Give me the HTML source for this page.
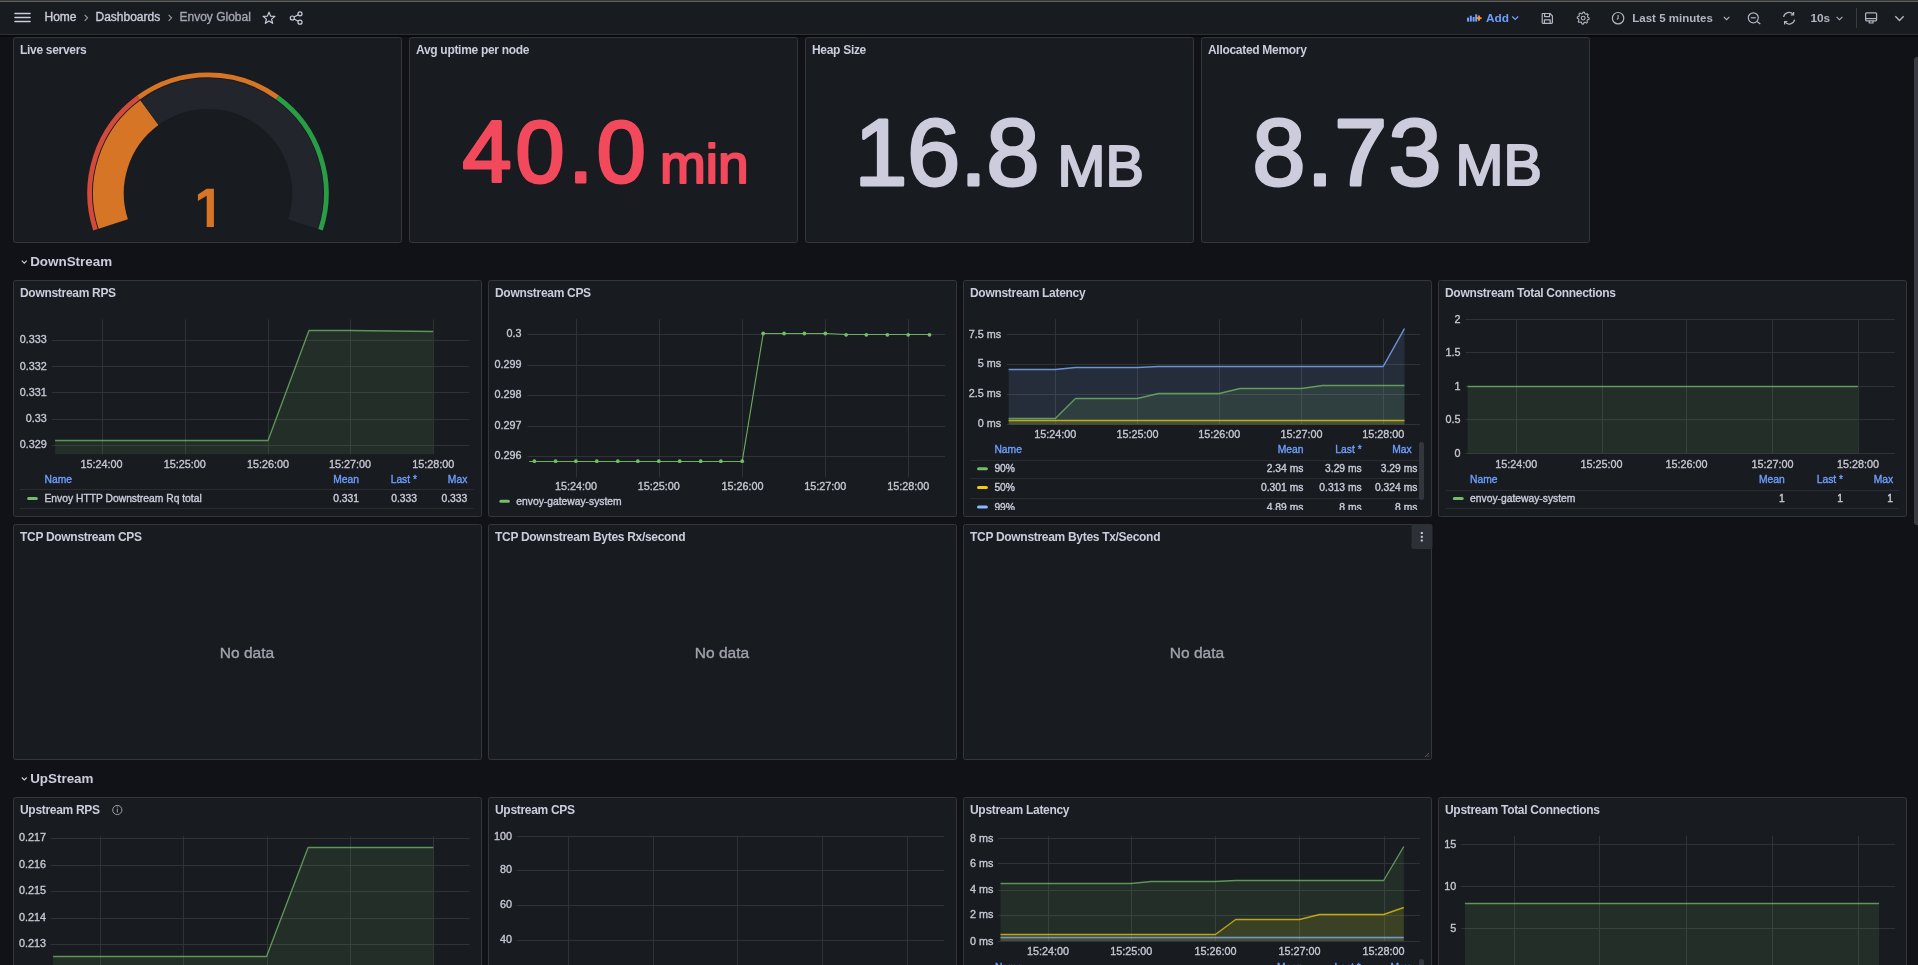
<!DOCTYPE html>
<html><head><meta charset="utf-8"><title>Envoy Global - Dashboards - Grafana</title>
<style>
html,body{margin:0;padding:0;background:#111217;width:1918px;height:965px;overflow:hidden;font-family:"Liberation Sans", sans-serif;}
svg{display:block;font-family:"Liberation Sans", sans-serif;will-change:transform;}
</style></head><body>
<svg width="1918" height="965" viewBox="0 0 1918 965">
<rect x="0" y="0" width="1918" height="35" fill="#181b1f" />
<rect x="0" y="0" width="1918" height="1" fill="#383838" />
<rect x="0" y="1" width="1918" height="1" fill="#606060" />
<rect x="0" y="34" width="1918" height="1" fill="#2e3035" />
<rect x="0" y="35" width="1918" height="2" fill="#08090b" />
<line x1="15" y1="13.5" x2="30" y2="13.5" stroke="#ccccdc" stroke-width="1.6" stroke-linecap="round"/>
<line x1="15" y1="17.5" x2="30" y2="17.5" stroke="#ccccdc" stroke-width="1.6" stroke-linecap="round"/>
<line x1="15" y1="21.5" x2="30" y2="21.5" stroke="#ccccdc" stroke-width="1.6" stroke-linecap="round"/>
<text x="44.5" y="21.3" font-size="12" fill="#ccccdc" font-weight="normal" text-anchor="start"  stroke="#ccccdc" stroke-width="0.35">Home</text>
<path d="M84.6 14.8 L87.6 17.8 L84.6 20.8" fill="none" stroke="#9a9aa8" stroke-width="1.1"/>
<text x="95.5" y="21.3" font-size="12" fill="#ccccdc" font-weight="normal" text-anchor="start"  stroke="#ccccdc" stroke-width="0.35">Dashboards</text>
<path d="M168.6 14.8 L171.6 17.8 L168.6 20.8" fill="none" stroke="#9a9aa8" stroke-width="1.1"/>
<text x="179.5" y="21.3" font-size="12" fill="#a5a5b3" font-weight="normal" text-anchor="start"  stroke="#a5a5b3" stroke-width="0.35">Envoy Global</text>
<polygon points="269.00,12.10 270.59,16.12 274.90,16.38 271.57,19.13 272.64,23.32 269.00,21.00 265.36,23.32 266.43,19.13 263.10,16.38 267.41,16.12" fill="none" stroke="#ccccdc" stroke-width="1.2" stroke-linejoin="round"/>
<g fill="none" stroke="#ccccdc" stroke-width="1.2"><circle cx="292.3" cy="18" r="2"/><circle cx="300" cy="13.8" r="2"/><circle cx="300" cy="22.2" r="2"/><line x1="294" y1="17" x2="298.3" y2="14.8"/><line x1="294" y1="19" x2="298.3" y2="21.2"/></g>
<rect x="1467" y="17.6" width="2" height="4.0" fill="#6e9fff" />
<rect x="1469.8" y="15.7" width="2" height="5.900000000000002" fill="#6e9fff" />
<rect x="1472.6" y="17" width="2" height="4.600000000000001" fill="#6e9fff" />
<rect x="1475.2" y="14.3" width="2" height="7.300000000000001" fill="#6e9fff" />
<path d="M1479 15.5 V20.7 M1476.4 18.1 H1481.6" stroke="#ff9830" stroke-width="1.8"/>
<text x="1486" y="21.6" font-size="11.8" fill="#6e9fff" font-weight="bold" text-anchor="start" >Add</text>
<path d="M1512.2 16.5 L1515.2 19.5 L1518.2 16.5" fill="none" stroke="#6e9fff" stroke-width="1.2"/>
<g fill="none" stroke="#b4b4c2" stroke-width="1.2" stroke-linejoin="round"><path d="M1542.2 13.5 H1550 L1552.4 15.9 V22.5 a0.8 0.8 0 0 1 -0.8 0.8 H1543 a0.8 0.8 0 0 1 -0.8 -0.8 Z"/><path d="M1544.6 13.5 V16.6 H1549.6 V13.5"/><path d="M1544.4 23.2 V19.8 H1550.2 V23.2"/></g>
<polygon points="1583.20,12.10 1584.37,12.22 1584.96,13.85 1585.76,14.28 1587.44,13.86 1588.19,14.77 1587.45,16.34 1587.71,17.20 1589.20,18.10 1589.08,19.27 1587.45,19.86 1587.02,20.66 1587.44,22.34 1586.53,23.09 1584.96,22.35 1584.10,22.61 1583.20,24.10 1582.03,23.98 1581.44,22.35 1580.64,21.92 1578.96,22.34 1578.21,21.43 1578.95,19.86 1578.69,19.00 1577.20,18.10 1577.32,16.93 1578.95,16.34 1579.38,15.54 1578.96,13.86 1579.87,13.11 1581.44,13.85 1582.30,13.59" fill="none" stroke="#b4b4c2" stroke-width="1.1" stroke-linejoin="round"/>
<circle cx="1583.2" cy="18.1" r="1.9" fill="none" stroke="#b4b4c2" stroke-width="1.1"/>
<circle cx="1618.1" cy="18.2" r="5.7" fill="none" stroke="#b4b4c2" stroke-width="1.2"/><path d="M1618.1 15 V18.4 L1616.8 19.4" fill="none" stroke="#b4b4c2" stroke-width="1.1"/>
<text x="1632.3" y="22.2" font-size="11.5" fill="#b4b4c2" font-weight="bold" text-anchor="start" >Last 5 minutes</text>
<path d="M1723.8 16.9 L1726.6 19.7 L1729.4 16.9" fill="none" stroke="#b4b4c2" stroke-width="1.1"/>
<g fill="none" stroke="#b4b4c2" stroke-width="1.2"><circle cx="1753.3" cy="17.8" r="5"/><path d="M1757 21.5 L1760.3 24"/><path d="M1750.8 17.8 H1755.8"/></g>
<g fill="none" stroke="#b4b4c2" stroke-width="1.2"><path d="M1783.6 17 A5.6 5.6 0 0 1 1793.2 14.2"/><path d="M1794.6 19.6 A5.6 5.6 0 0 1 1785 22.2"/><path d="M1793.6 11.9 V14.8 H1790.8"/><path d="M1784.6 24.5 V21.6 H1787.4"/></g>
<text x="1810.5" y="22.2" font-size="11.8" fill="#b4b4c2" font-weight="bold" text-anchor="start" >10s</text>
<path d="M1836.6 16.9 L1839.5 19.8 L1842.4 16.9" fill="none" stroke="#b4b4c2" stroke-width="1.1"/>
<rect x="1856" y="8" width="1" height="20" fill="#3a3c42" />
<g fill="none" stroke="#b4b4c2" stroke-width="1.2"><rect x="1865.6" y="12.8" width="11" height="8" rx="1"/><path d="M1865.6 18.6 H1876.6"/><path d="M1869.3 20.8 V23 H1873 V20.8"/></g>
<path d="M1895.3 16.2 L1899.5 20.4 L1903.7 16.2" fill="none" stroke="#b4b4c2" stroke-width="1.4"/>
<rect x="13.5" y="37.5" width="388" height="205" rx="2" fill="#181b1f" stroke="#34363b" stroke-width="1"/>
<text x="20" y="54" font-size="12" fill="#ccccdc" font-weight="bold" text-anchor="start" letter-spacing="-0.3">Live servers</text>
<rect x="409.5" y="37.5" width="388" height="205" rx="2" fill="#181b1f" stroke="#34363b" stroke-width="1"/>
<text x="416" y="54" font-size="12" fill="#ccccdc" font-weight="bold" text-anchor="start" letter-spacing="-0.3">Avg uptime per node</text>
<rect x="805.5" y="37.5" width="388" height="205" rx="2" fill="#181b1f" stroke="#34363b" stroke-width="1"/>
<text x="812" y="54" font-size="12" fill="#ccccdc" font-weight="bold" text-anchor="start" letter-spacing="-0.3">Heap Size</text>
<rect x="1201.5" y="37.5" width="388" height="205" rx="2" fill="#181b1f" stroke="#34363b" stroke-width="1"/>
<text x="1208" y="54" font-size="12" fill="#ccccdc" font-weight="bold" text-anchor="start" letter-spacing="-0.3">Allocated Memory</text>
<path d="M95.49 229.76 A118.3 118.3 0 0 1 138.47 97.49" fill="none" stroke="#d44a3a" stroke-width="4.8"/>
<path d="M138.47 97.49 A118.3 118.3 0 0 1 277.53 97.49" fill="none" stroke="#d67526" stroke-width="4.8"/>
<path d="M277.53 97.49 A118.3 118.3 0 0 1 320.51 229.76" fill="none" stroke="#299c46" stroke-width="4.8"/>
<path d="M113.27 223.98 A99.6 99.6 0 0 1 149.46 112.62" fill="none" stroke="#d67526" stroke-width="30.8"/>
<path d="M149.46 112.62 A99.6 99.6 0 0 1 302.73 223.98" fill="none" stroke="#22252b" stroke-width="30.8"/>
<path d="M197.9 194.4 L206.6 188.8 L213.9 188.8 L213.9 227 L206.7 227 L206.7 195.7 L197.9 200.9 Z" fill="#d67526"/>
<text x="462.5" y="182.3" font-size="88" fill="#f2495c" font-weight="normal" text-anchor="start" stroke="#f2495c" stroke-width="3" stroke-linejoin="round" letter-spacing="4">40.0</text>
<text x="660" y="182.70000000000002" font-size="55" fill="#f2495c" font-weight="normal" text-anchor="start" stroke="#f2495c" stroke-width="2.2" stroke-linejoin="round" letter-spacing="0">min</text>
<text x="854.5" y="185.4" font-size="95" fill="#ccccdc" font-weight="normal" text-anchor="start" stroke="#ccccdc" stroke-width="3" stroke-linejoin="round" letter-spacing="0">16.8</text>
<text x="1057.5" y="185.8" font-size="57.5" fill="#ccccdc" font-weight="normal" text-anchor="start" stroke="#ccccdc" stroke-width="2.2" stroke-linejoin="round" letter-spacing="0">MB</text>
<text x="1252.5" y="184.6" font-size="95" fill="#ccccdc" font-weight="normal" text-anchor="start" stroke="#ccccdc" stroke-width="3" stroke-linejoin="round" letter-spacing="1.3">8.73</text>
<text x="1455.5" y="185.0" font-size="57.5" fill="#ccccdc" font-weight="normal" text-anchor="start" stroke="#ccccdc" stroke-width="2.2" stroke-linejoin="round" letter-spacing="0">MB</text>
<text x="30.2" y="266.2" font-size="13.4" fill="#ccccdc" font-weight="bold" text-anchor="start" >DownStream</text>
<path d="M21.8 260.59999999999997 L24.3 263.09999999999997 L26.8 260.59999999999997" fill="none" stroke="#ccccdc" stroke-width="1.1"/>
<text x="30.2" y="783.1" font-size="13.4" fill="#ccccdc" font-weight="bold" text-anchor="start" >UpStream</text>
<path d="M21.8 777.5 L24.3 780.0 L26.8 777.5" fill="none" stroke="#ccccdc" stroke-width="1.1"/>
<rect x="13.5" y="280.5" width="468" height="236" rx="2" fill="#181b1f" stroke="#34363b" stroke-width="1"/>
<text x="20" y="297" font-size="12" fill="#ccccdc" font-weight="bold" text-anchor="start" letter-spacing="-0.3">Downstream RPS</text>
<line x1="51.8" y1="340.5" x2="469.3" y2="340.5" stroke="#303237" stroke-width="1"/>
<line x1="51.8" y1="366.5" x2="469.3" y2="366.5" stroke="#303237" stroke-width="1"/>
<line x1="51.8" y1="392.5" x2="469.3" y2="392.5" stroke="#303237" stroke-width="1"/>
<line x1="51.8" y1="419.5" x2="469.3" y2="419.5" stroke="#303237" stroke-width="1"/>
<line x1="51.8" y1="445.5" x2="469.3" y2="445.5" stroke="#303237" stroke-width="1"/>
<line x1="102.5" y1="319.4" x2="102.5" y2="454.3" stroke="#303237" stroke-width="1"/>
<line x1="185.5" y1="319.4" x2="185.5" y2="454.3" stroke="#303237" stroke-width="1"/>
<line x1="268.5" y1="319.4" x2="268.5" y2="454.3" stroke="#303237" stroke-width="1"/>
<line x1="350.5" y1="319.4" x2="350.5" y2="454.3" stroke="#303237" stroke-width="1"/>
<line x1="433.5" y1="319.4" x2="433.5" y2="454.3" stroke="#303237" stroke-width="1"/>
<text x="46.7" y="343.4" font-size="10.8" fill="#c7c7d3" font-weight="normal" text-anchor="end"  stroke="#c7c7d3" stroke-width="0.35">0.333</text>
<text x="46.7" y="369.5" font-size="10.8" fill="#c7c7d3" font-weight="normal" text-anchor="end"  stroke="#c7c7d3" stroke-width="0.35">0.332</text>
<text x="46.7" y="395.5" font-size="10.8" fill="#c7c7d3" font-weight="normal" text-anchor="end"  stroke="#c7c7d3" stroke-width="0.35">0.331</text>
<text x="46.7" y="422.09999999999997" font-size="10.8" fill="#c7c7d3" font-weight="normal" text-anchor="end"  stroke="#c7c7d3" stroke-width="0.35">0.33</text>
<text x="46.7" y="448.4" font-size="10.8" fill="#c7c7d3" font-weight="normal" text-anchor="end"  stroke="#c7c7d3" stroke-width="0.35">0.329</text>
<text x="101.6" y="468.4" font-size="10.8" fill="#c7c7d3" font-weight="normal" text-anchor="middle"  stroke="#c7c7d3" stroke-width="0.35">15:24:00</text>
<text x="184.7" y="468.4" font-size="10.8" fill="#c7c7d3" font-weight="normal" text-anchor="middle"  stroke="#c7c7d3" stroke-width="0.35">15:25:00</text>
<text x="268.1" y="468.4" font-size="10.8" fill="#c7c7d3" font-weight="normal" text-anchor="middle"  stroke="#c7c7d3" stroke-width="0.35">15:26:00</text>
<text x="350.1" y="468.4" font-size="10.8" fill="#c7c7d3" font-weight="normal" text-anchor="middle"  stroke="#c7c7d3" stroke-width="0.35">15:27:00</text>
<text x="433.2" y="468.4" font-size="10.8" fill="#c7c7d3" font-weight="normal" text-anchor="middle"  stroke="#c7c7d3" stroke-width="0.35">15:28:00</text>
<clipPath id="c1"><rect x="14" y="281" width="467" height="235"/></clipPath>
<g clip-path="url(#c1)">
<path d="M55.1 440.6 L268.0 440.6 L309.0 330.6 L350.0 330.8 L433.2 331.7 L433.2 454.3 L55.1 454.3 Z" fill="#73bf69" fill-opacity="0.12"/>
<path d="M55.1 440.5 L268.0 440.5 L309.0 330.5 L350.0 330.5 L433.2 331.5" fill="none" stroke="#73bf69" stroke-opacity="0.74" stroke-width="1.35" stroke-linejoin="round"/>
</g>
<g clip-path="url(#c1L)">
<clipPath id="c1L"><rect x="14" y="280" width="467" height="235"/></clipPath>
<text x="44.5" y="483.2" font-size="10.3" fill="#6e9fff" font-weight="normal" text-anchor="start"  stroke="#6e9fff" stroke-width="0.35">Name</text>
<text x="359" y="483.2" font-size="10.3" fill="#6e9fff" font-weight="normal" text-anchor="end"  stroke="#6e9fff" stroke-width="0.35">Mean</text>
<text x="417" y="483.2" font-size="10.3" fill="#6e9fff" font-weight="normal" text-anchor="end"  stroke="#6e9fff" stroke-width="0.35">Last *</text>
<text x="467.3" y="483.2" font-size="10.3" fill="#6e9fff" font-weight="normal" text-anchor="end"  stroke="#6e9fff" stroke-width="0.35">Max</text>
<line x1="20" y1="489.5" x2="473.5" y2="489.5" stroke="#2a2c31" stroke-width="1"/>
<line x1="20" y1="508.5" x2="473.5" y2="508.5" stroke="#2a2c31" stroke-width="1"/>
<rect x="27.1" y="497.0" width="10.699999999999996" height="3" rx="1.5" fill="#73bf69"/>
<text x="44.5" y="502.2" font-size="10.3" fill="#ccccdc" font-weight="normal" text-anchor="start"  stroke="#ccccdc" stroke-width="0.35">Envoy HTTP Downstream Rq total</text>
<text x="359" y="502.2" font-size="10.3" fill="#ccccdc" font-weight="normal" text-anchor="end"  stroke="#ccccdc" stroke-width="0.35">0.331</text>
<text x="417" y="502.2" font-size="10.3" fill="#ccccdc" font-weight="normal" text-anchor="end"  stroke="#ccccdc" stroke-width="0.35">0.333</text>
<text x="467.3" y="502.2" font-size="10.3" fill="#ccccdc" font-weight="normal" text-anchor="end"  stroke="#ccccdc" stroke-width="0.35">0.333</text>
</g>
<rect x="488.5" y="280.5" width="468" height="236" rx="2" fill="#181b1f" stroke="#34363b" stroke-width="1"/>
<text x="495" y="297" font-size="12" fill="#ccccdc" font-weight="bold" text-anchor="start" letter-spacing="-0.3">Downstream CPS</text>
<line x1="527.4" y1="334.5" x2="945" y2="334.5" stroke="#303237" stroke-width="1"/>
<line x1="527.4" y1="365.5" x2="945" y2="365.5" stroke="#303237" stroke-width="1"/>
<line x1="527.4" y1="395.5" x2="945" y2="395.5" stroke="#303237" stroke-width="1"/>
<line x1="527.4" y1="426.5" x2="945" y2="426.5" stroke="#303237" stroke-width="1"/>
<line x1="527.4" y1="456.5" x2="945" y2="456.5" stroke="#303237" stroke-width="1"/>
<line x1="576.5" y1="319.2" x2="576.5" y2="477.3" stroke="#303237" stroke-width="1"/>
<line x1="659.5" y1="319.2" x2="659.5" y2="477.3" stroke="#303237" stroke-width="1"/>
<line x1="742.5" y1="319.2" x2="742.5" y2="477.3" stroke="#303237" stroke-width="1"/>
<line x1="825.5" y1="319.2" x2="825.5" y2="477.3" stroke="#303237" stroke-width="1"/>
<line x1="908.5" y1="319.2" x2="908.5" y2="477.3" stroke="#303237" stroke-width="1"/>
<text x="521.5" y="337.4" font-size="10.8" fill="#c7c7d3" font-weight="normal" text-anchor="end"  stroke="#c7c7d3" stroke-width="0.35">0.3</text>
<text x="521.5" y="367.9" font-size="10.8" fill="#c7c7d3" font-weight="normal" text-anchor="end"  stroke="#c7c7d3" stroke-width="0.35">0.299</text>
<text x="521.5" y="398.29999999999995" font-size="10.8" fill="#c7c7d3" font-weight="normal" text-anchor="end"  stroke="#c7c7d3" stroke-width="0.35">0.298</text>
<text x="521.5" y="429.29999999999995" font-size="10.8" fill="#c7c7d3" font-weight="normal" text-anchor="end"  stroke="#c7c7d3" stroke-width="0.35">0.297</text>
<text x="521.5" y="459.4" font-size="10.8" fill="#c7c7d3" font-weight="normal" text-anchor="end"  stroke="#c7c7d3" stroke-width="0.35">0.296</text>
<text x="575.9" y="490.2" font-size="10.8" fill="#c7c7d3" font-weight="normal" text-anchor="middle"  stroke="#c7c7d3" stroke-width="0.35">15:24:00</text>
<text x="658.8" y="490.2" font-size="10.8" fill="#c7c7d3" font-weight="normal" text-anchor="middle"  stroke="#c7c7d3" stroke-width="0.35">15:25:00</text>
<text x="742.4" y="490.2" font-size="10.8" fill="#c7c7d3" font-weight="normal" text-anchor="middle"  stroke="#c7c7d3" stroke-width="0.35">15:26:00</text>
<text x="825.3" y="490.2" font-size="10.8" fill="#c7c7d3" font-weight="normal" text-anchor="middle"  stroke="#c7c7d3" stroke-width="0.35">15:27:00</text>
<text x="908.2" y="490.2" font-size="10.8" fill="#c7c7d3" font-weight="normal" text-anchor="middle"  stroke="#c7c7d3" stroke-width="0.35">15:28:00</text>
<clipPath id="c2"><rect x="489" y="281" width="467" height="235"/></clipPath>
<g clip-path="url(#c2)">
<path d="M529.2 461.5 L534.4 461.5 L555.6 461.5 L575.9 461.5 L596.8 461.5 L617.8 461.5 L637.8 461.5 L658.8 461.5 L679.7 461.5 L700.7 461.5 L720.9 461.5 L742.2 461.5 L763.2 333.5 L784.1 333.5 L804.4 333.5 L825.3 333.5 L846.1 334.5 L866.3 334.5 L887.3 334.5 L908.2 334.5 L929.5 334.5" fill="none" stroke="#6cb163" stroke-opacity="1" stroke-width="1.1" stroke-linejoin="round"/>
<circle cx="534.4" cy="461.2" r="1.9" fill="#73bf69"/>
<circle cx="555.6" cy="461.2" r="1.9" fill="#73bf69"/>
<circle cx="575.9" cy="461.2" r="1.9" fill="#73bf69"/>
<circle cx="596.8" cy="461.2" r="1.9" fill="#73bf69"/>
<circle cx="617.8" cy="461.2" r="1.9" fill="#73bf69"/>
<circle cx="637.8" cy="461.2" r="1.9" fill="#73bf69"/>
<circle cx="658.8" cy="461.2" r="1.9" fill="#73bf69"/>
<circle cx="679.7" cy="461.2" r="1.9" fill="#73bf69"/>
<circle cx="700.7" cy="461.2" r="1.9" fill="#73bf69"/>
<circle cx="720.9" cy="461.2" r="1.9" fill="#73bf69"/>
<circle cx="742.2" cy="461.2" r="1.9" fill="#73bf69"/>
<circle cx="763.2" cy="333.5" r="1.9" fill="#73bf69"/>
<circle cx="784.1" cy="333.5" r="1.9" fill="#73bf69"/>
<circle cx="804.4" cy="333.5" r="1.9" fill="#73bf69"/>
<circle cx="825.3" cy="333.5" r="1.9" fill="#73bf69"/>
<circle cx="846.1" cy="334.8" r="1.9" fill="#73bf69"/>
<circle cx="866.3" cy="334.8" r="1.9" fill="#73bf69"/>
<circle cx="887.3" cy="334.8" r="1.9" fill="#73bf69"/>
<circle cx="908.2" cy="334.8" r="1.9" fill="#73bf69"/>
<circle cx="929.5" cy="334.8" r="1.9" fill="#73bf69"/>
</g>
<rect x="499.4" y="499.8" width="10.400000000000034" height="3" rx="1.5" fill="#73bf69"/>
<text x="516.3" y="505.0" font-size="10.3" fill="#ccccdc" font-weight="normal" text-anchor="start"  stroke="#ccccdc" stroke-width="0.35">envoy-gateway-system</text>
<rect x="963.5" y="280.5" width="468" height="236" rx="2" fill="#181b1f" stroke="#34363b" stroke-width="1"/>
<text x="970" y="297" font-size="12" fill="#ccccdc" font-weight="bold" text-anchor="start" letter-spacing="-0.3">Downstream Latency</text>
<line x1="1006.8" y1="334.5" x2="1420" y2="334.5" stroke="#303237" stroke-width="1"/>
<line x1="1006.8" y1="364.5" x2="1420" y2="364.5" stroke="#303237" stroke-width="1"/>
<line x1="1006.8" y1="394.5" x2="1420" y2="394.5" stroke="#303237" stroke-width="1"/>
<line x1="1006.8" y1="424.5" x2="1420" y2="424.5" stroke="#303237" stroke-width="1"/>
<line x1="1055.5" y1="319.2" x2="1055.5" y2="424.5" stroke="#303237" stroke-width="1"/>
<line x1="1137.5" y1="319.2" x2="1137.5" y2="424.5" stroke="#303237" stroke-width="1"/>
<line x1="1219.5" y1="319.2" x2="1219.5" y2="424.5" stroke="#303237" stroke-width="1"/>
<line x1="1301.5" y1="319.2" x2="1301.5" y2="424.5" stroke="#303237" stroke-width="1"/>
<line x1="1383.5" y1="319.2" x2="1383.5" y2="424.5" stroke="#303237" stroke-width="1"/>
<text x="1001.1" y="337.59999999999997" font-size="10.8" fill="#c7c7d3" font-weight="normal" text-anchor="end"  stroke="#c7c7d3" stroke-width="0.35">7.5 ms</text>
<text x="1001.1" y="367.2" font-size="10.8" fill="#c7c7d3" font-weight="normal" text-anchor="end"  stroke="#c7c7d3" stroke-width="0.35">5 ms</text>
<text x="1001.1" y="397.2" font-size="10.8" fill="#c7c7d3" font-weight="normal" text-anchor="end"  stroke="#c7c7d3" stroke-width="0.35">2.5 ms</text>
<text x="1001.1" y="427.29999999999995" font-size="10.8" fill="#c7c7d3" font-weight="normal" text-anchor="end"  stroke="#c7c7d3" stroke-width="0.35">0 ms</text>
<text x="1055.3" y="438.4" font-size="10.8" fill="#c7c7d3" font-weight="normal" text-anchor="middle"  stroke="#c7c7d3" stroke-width="0.35">15:24:00</text>
<text x="1137.4" y="438.4" font-size="10.8" fill="#c7c7d3" font-weight="normal" text-anchor="middle"  stroke="#c7c7d3" stroke-width="0.35">15:25:00</text>
<text x="1219.2" y="438.4" font-size="10.8" fill="#c7c7d3" font-weight="normal" text-anchor="middle"  stroke="#c7c7d3" stroke-width="0.35">15:26:00</text>
<text x="1301.4" y="438.4" font-size="10.8" fill="#c7c7d3" font-weight="normal" text-anchor="middle"  stroke="#c7c7d3" stroke-width="0.35">15:27:00</text>
<text x="1383.2" y="438.4" font-size="10.8" fill="#c7c7d3" font-weight="normal" text-anchor="middle"  stroke="#c7c7d3" stroke-width="0.35">15:28:00</text>
<clipPath id="c3"><rect x="964" y="281" width="467" height="235"/></clipPath>
<g clip-path="url(#c3)">
<path d="M1008.6 369.0 L1055.3 369.0 L1075.5 367.9 L1137.4 367.9 L1158.4 366.9 L1301.4 366.9 L1322.4 366.1 L1383.2 366.1 L1404.5 328.5 L1404.5 424.5 L1008.6 424.5 Z" fill="#8ab8ff" fill-opacity="0.12"/>
<path d="M1008.6 418.2 L1055.3 418.2 L1075.5 398.2 L1137.4 398.2 L1158.4 393.3 L1219.2 393.3 L1240.0 388.1 L1301.4 388.1 L1322.4 385.3 L1404.5 385.3 L1404.5 424.5 L1008.6 424.5 Z" fill="#73bf69" fill-opacity="0.12"/>
<path d="M1008.6 420.3 L1404.5 420.3 L1404.5 424.5 L1008.6 424.5 Z" fill="#f2cc0c" fill-opacity="0.12"/>
<path d="M1008.6 369.5 L1055.3 369.5 L1075.5 367.5 L1137.4 367.5 L1158.4 366.5 L1301.4 366.5 L1322.4 366.5 L1383.2 366.5 L1404.5 328.5" fill="none" stroke="#6b93d6" stroke-opacity="1" stroke-width="1.5" stroke-linejoin="round"/>
<path d="M1008.6 418.5 L1055.3 418.5 L1075.5 398.5 L1137.4 398.5 L1158.4 393.5 L1219.2 393.5 L1240.0 388.5 L1301.4 388.5 L1322.4 385.5 L1404.5 385.5" fill="none" stroke="#73bf69" stroke-opacity="0.74" stroke-width="1.35" stroke-linejoin="round"/>
<path d="M1008.6 420.5 L1404.5 420.5" fill="none" stroke="#f2cc0c" stroke-opacity="0.74" stroke-width="1.35" stroke-linejoin="round"/>
</g>
<g clip-path="url(#c3L)">
<clipPath id="c3L"><rect x="964" y="280" width="467" height="230"/></clipPath>
<text x="994.4" y="453.2" font-size="10.3" fill="#6e9fff" font-weight="normal" text-anchor="start"  stroke="#6e9fff" stroke-width="0.35">Name</text>
<text x="1303.4" y="453.2" font-size="10.3" fill="#6e9fff" font-weight="normal" text-anchor="end"  stroke="#6e9fff" stroke-width="0.35">Mean</text>
<text x="1361.7" y="453.2" font-size="10.3" fill="#6e9fff" font-weight="normal" text-anchor="end"  stroke="#6e9fff" stroke-width="0.35">Last *</text>
<text x="1411.7" y="453.2" font-size="10.3" fill="#6e9fff" font-weight="normal" text-anchor="end"  stroke="#6e9fff" stroke-width="0.35">Max</text>
<line x1="970" y1="460.5" x2="1423" y2="460.5" stroke="#2a2c31" stroke-width="1"/>
<line x1="970" y1="478.5" x2="1423" y2="478.5" stroke="#2a2c31" stroke-width="1"/>
<line x1="970" y1="498.5" x2="1423" y2="498.5" stroke="#2a2c31" stroke-width="1"/>
<rect x="977" y="467.2" width="10.899999999999977" height="3" rx="1.5" fill="#73bf69"/>
<text x="994.4" y="472.4" font-size="10.3" fill="#ccccdc" font-weight="normal" text-anchor="start"  stroke="#ccccdc" stroke-width="0.35">90%</text>
<text x="1303.4" y="472.4" font-size="10.3" fill="#ccccdc" font-weight="normal" text-anchor="end"  stroke="#ccccdc" stroke-width="0.35">2.34 ms</text>
<text x="1361.7" y="472.4" font-size="10.3" fill="#ccccdc" font-weight="normal" text-anchor="end"  stroke="#ccccdc" stroke-width="0.35">3.29 ms</text>
<text x="1417.4" y="472.4" font-size="10.3" fill="#ccccdc" font-weight="normal" text-anchor="end"  stroke="#ccccdc" stroke-width="0.35">3.29 ms</text>
<rect x="977" y="486.1" width="10.899999999999977" height="3" rx="1.5" fill="#f2cc0c"/>
<text x="994.4" y="491.3" font-size="10.3" fill="#ccccdc" font-weight="normal" text-anchor="start"  stroke="#ccccdc" stroke-width="0.35">50%</text>
<text x="1303.4" y="491.3" font-size="10.3" fill="#ccccdc" font-weight="normal" text-anchor="end"  stroke="#ccccdc" stroke-width="0.35">0.301 ms</text>
<text x="1361.7" y="491.3" font-size="10.3" fill="#ccccdc" font-weight="normal" text-anchor="end"  stroke="#ccccdc" stroke-width="0.35">0.313 ms</text>
<text x="1417.4" y="491.3" font-size="10.3" fill="#ccccdc" font-weight="normal" text-anchor="end"  stroke="#ccccdc" stroke-width="0.35">0.324 ms</text>
<rect x="977" y="505.5" width="10.899999999999977" height="3" rx="1.5" fill="#8ab8ff"/>
<text x="994.4" y="510.7" font-size="10.3" fill="#ccccdc" font-weight="normal" text-anchor="start"  stroke="#ccccdc" stroke-width="0.35">99%</text>
<text x="1303.4" y="510.7" font-size="10.3" fill="#ccccdc" font-weight="normal" text-anchor="end"  stroke="#ccccdc" stroke-width="0.35">4.89 ms</text>
<text x="1361.7" y="510.7" font-size="10.3" fill="#ccccdc" font-weight="normal" text-anchor="end"  stroke="#ccccdc" stroke-width="0.35">8 ms</text>
<text x="1417.4" y="510.7" font-size="10.3" fill="#ccccdc" font-weight="normal" text-anchor="end"  stroke="#ccccdc" stroke-width="0.35">8 ms</text>
</g>
<rect x="1419" y="442" width="5" height="58" rx="2.5" fill="#34363d"/>
<rect x="1438.5" y="280.5" width="468" height="236" rx="2" fill="#181b1f" stroke="#34363b" stroke-width="1"/>
<text x="1445" y="297" font-size="12" fill="#ccccdc" font-weight="bold" text-anchor="start" letter-spacing="-0.3">Downstream Total Connections</text>
<line x1="1465.5" y1="319.5" x2="1894.9" y2="319.5" stroke="#303237" stroke-width="1"/>
<line x1="1465.5" y1="352.5" x2="1894.9" y2="352.5" stroke="#303237" stroke-width="1"/>
<line x1="1465.5" y1="386.5" x2="1894.9" y2="386.5" stroke="#303237" stroke-width="1"/>
<line x1="1465.5" y1="419.5" x2="1894.9" y2="419.5" stroke="#303237" stroke-width="1"/>
<line x1="1465.5" y1="453.5" x2="1894.9" y2="453.5" stroke="#303237" stroke-width="1"/>
<line x1="1516.5" y1="319" x2="1516.5" y2="453.4" stroke="#303237" stroke-width="1"/>
<line x1="1602.5" y1="319" x2="1602.5" y2="453.4" stroke="#303237" stroke-width="1"/>
<line x1="1686.5" y1="319" x2="1686.5" y2="453.4" stroke="#303237" stroke-width="1"/>
<line x1="1772.5" y1="319" x2="1772.5" y2="453.4" stroke="#303237" stroke-width="1"/>
<line x1="1858.5" y1="319" x2="1858.5" y2="453.4" stroke="#303237" stroke-width="1"/>
<text x="1460.6" y="322.59999999999997" font-size="10.8" fill="#c7c7d3" font-weight="normal" text-anchor="end"  stroke="#c7c7d3" stroke-width="0.35">2</text>
<text x="1460.6" y="355.7" font-size="10.8" fill="#c7c7d3" font-weight="normal" text-anchor="end"  stroke="#c7c7d3" stroke-width="0.35">1.5</text>
<text x="1460.6" y="389.7" font-size="10.8" fill="#c7c7d3" font-weight="normal" text-anchor="end"  stroke="#c7c7d3" stroke-width="0.35">1</text>
<text x="1460.6" y="422.79999999999995" font-size="10.8" fill="#c7c7d3" font-weight="normal" text-anchor="end"  stroke="#c7c7d3" stroke-width="0.35">0.5</text>
<text x="1460.6" y="456.5" font-size="10.8" fill="#c7c7d3" font-weight="normal" text-anchor="end"  stroke="#c7c7d3" stroke-width="0.35">0</text>
<text x="1516.2" y="468.09999999999997" font-size="10.8" fill="#c7c7d3" font-weight="normal" text-anchor="middle"  stroke="#c7c7d3" stroke-width="0.35">15:24:00</text>
<text x="1601.5" y="468.09999999999997" font-size="10.8" fill="#c7c7d3" font-weight="normal" text-anchor="middle"  stroke="#c7c7d3" stroke-width="0.35">15:25:00</text>
<text x="1686.4" y="468.09999999999997" font-size="10.8" fill="#c7c7d3" font-weight="normal" text-anchor="middle"  stroke="#c7c7d3" stroke-width="0.35">15:26:00</text>
<text x="1772.4" y="468.09999999999997" font-size="10.8" fill="#c7c7d3" font-weight="normal" text-anchor="middle"  stroke="#c7c7d3" stroke-width="0.35">15:27:00</text>
<text x="1857.9" y="468.09999999999997" font-size="10.8" fill="#c7c7d3" font-weight="normal" text-anchor="middle"  stroke="#c7c7d3" stroke-width="0.35">15:28:00</text>
<clipPath id="c4"><rect x="1439" y="281" width="467" height="235"/></clipPath>
<g clip-path="url(#c4)">
<path d="M1467.6 386.5 L1857.9 386.5 L1857.9 453.4 L1467.6 453.4 Z" fill="#73bf69" fill-opacity="0.12"/>
<path d="M1467.6 386.5 L1857.9 386.5" fill="none" stroke="#73bf69" stroke-opacity="0.74" stroke-width="1.35" stroke-linejoin="round"/>
</g>
<g clip-path="url(#c4L)">
<clipPath id="c4L"><rect x="1439" y="280" width="467" height="235"/></clipPath>
<text x="1470.1" y="483.0" font-size="10.3" fill="#6e9fff" font-weight="normal" text-anchor="start"  stroke="#6e9fff" stroke-width="0.35">Name</text>
<text x="1784.8" y="483.0" font-size="10.3" fill="#6e9fff" font-weight="normal" text-anchor="end"  stroke="#6e9fff" stroke-width="0.35">Mean</text>
<text x="1843.1" y="483.0" font-size="10.3" fill="#6e9fff" font-weight="normal" text-anchor="end"  stroke="#6e9fff" stroke-width="0.35">Last *</text>
<text x="1893.1" y="483.0" font-size="10.3" fill="#6e9fff" font-weight="normal" text-anchor="end"  stroke="#6e9fff" stroke-width="0.35">Max</text>
<line x1="1446" y1="490.5" x2="1899.3" y2="490.5" stroke="#2a2c31" stroke-width="1"/>
<line x1="1446" y1="508.5" x2="1899.3" y2="508.5" stroke="#2a2c31" stroke-width="1"/>
<rect x="1452.8" y="496.9" width="10.900000000000091" height="3" rx="1.5" fill="#73bf69"/>
<text x="1470.1" y="502.09999999999997" font-size="10.3" fill="#ccccdc" font-weight="normal" text-anchor="start"  stroke="#ccccdc" stroke-width="0.35">envoy-gateway-system</text>
<text x="1784.8" y="502.09999999999997" font-size="10.3" fill="#ccccdc" font-weight="normal" text-anchor="end"  stroke="#ccccdc" stroke-width="0.35">1</text>
<text x="1843.1" y="502.09999999999997" font-size="10.3" fill="#ccccdc" font-weight="normal" text-anchor="end"  stroke="#ccccdc" stroke-width="0.35">1</text>
<text x="1893.1" y="502.09999999999997" font-size="10.3" fill="#ccccdc" font-weight="normal" text-anchor="end"  stroke="#ccccdc" stroke-width="0.35">1</text>
</g>
<rect x="13.5" y="524.5" width="468" height="235" rx="2" fill="#181b1f" stroke="#34363b" stroke-width="1"/>
<text x="20" y="541" font-size="12" fill="#ccccdc" font-weight="bold" text-anchor="start" letter-spacing="-0.3">TCP Downstream CPS</text>
<text x="247" y="657.5" font-size="15.5" fill="#a3a3ae" font-weight="normal" text-anchor="middle"  stroke="#a3a3ae" stroke-width="0.35">No data</text>
<rect x="488.5" y="524.5" width="468" height="235" rx="2" fill="#181b1f" stroke="#34363b" stroke-width="1"/>
<text x="495" y="541" font-size="12" fill="#ccccdc" font-weight="bold" text-anchor="start" letter-spacing="-0.3">TCP Downstream Bytes Rx/second</text>
<text x="722" y="657.5" font-size="15.5" fill="#a3a3ae" font-weight="normal" text-anchor="middle"  stroke="#a3a3ae" stroke-width="0.35">No data</text>
<rect x="963.5" y="524.5" width="468" height="235" rx="2" fill="#181b1f" stroke="#34363b" stroke-width="1"/>
<text x="970" y="541" font-size="12" fill="#ccccdc" font-weight="bold" text-anchor="start" letter-spacing="-0.3">TCP Downstream Bytes Tx/Second</text>
<text x="1197" y="657.5" font-size="15.5" fill="#a3a3ae" font-weight="normal" text-anchor="middle"  stroke="#a3a3ae" stroke-width="0.35">No data</text>
<rect x="1411.5" y="524" width="21" height="25" rx="2" fill="#2d3037"/>
<rect x="1420.8" y="532" width="2" height="2" fill="#ccccdc"/>
<rect x="1420.8" y="535.8" width="2" height="2" fill="#ccccdc"/>
<rect x="1420.8" y="539.5" width="2" height="2" fill="#ccccdc"/>
<path d="M1425 757 L1429 753 M1427.5 757 L1429 755.5" stroke="#6a6a75" stroke-width="0.8"/>
<rect x="13.5" y="797.5" width="468" height="203" rx="2" fill="#181b1f" stroke="#34363b" stroke-width="1"/>
<text x="20" y="814" font-size="12" fill="#ccccdc" font-weight="bold" text-anchor="start" letter-spacing="-0.3">Upstream RPS</text>
<line x1="50.6" y1="838.5" x2="469.6" y2="838.5" stroke="#303237" stroke-width="1"/>
<line x1="50.6" y1="865.5" x2="469.6" y2="865.5" stroke="#303237" stroke-width="1"/>
<line x1="50.6" y1="891.5" x2="469.6" y2="891.5" stroke="#303237" stroke-width="1"/>
<line x1="50.6" y1="918.5" x2="469.6" y2="918.5" stroke="#303237" stroke-width="1"/>
<line x1="50.6" y1="944.5" x2="469.6" y2="944.5" stroke="#303237" stroke-width="1"/>
<line x1="100.5" y1="836.2" x2="100.5" y2="1000" stroke="#303237" stroke-width="1"/>
<line x1="183.5" y1="836.2" x2="183.5" y2="1000" stroke="#303237" stroke-width="1"/>
<line x1="267.5" y1="836.2" x2="267.5" y2="1000" stroke="#303237" stroke-width="1"/>
<line x1="350.5" y1="836.2" x2="350.5" y2="1000" stroke="#303237" stroke-width="1"/>
<line x1="433.5" y1="836.2" x2="433.5" y2="1000" stroke="#303237" stroke-width="1"/>
<text x="46" y="841.4" font-size="10.8" fill="#c7c7d3" font-weight="normal" text-anchor="end"  stroke="#c7c7d3" stroke-width="0.35">0.217</text>
<text x="46" y="868.1999999999999" font-size="10.8" fill="#c7c7d3" font-weight="normal" text-anchor="end"  stroke="#c7c7d3" stroke-width="0.35">0.216</text>
<text x="46" y="894.3" font-size="10.8" fill="#c7c7d3" font-weight="normal" text-anchor="end"  stroke="#c7c7d3" stroke-width="0.35">0.215</text>
<text x="46" y="920.6" font-size="10.8" fill="#c7c7d3" font-weight="normal" text-anchor="end"  stroke="#c7c7d3" stroke-width="0.35">0.214</text>
<text x="46" y="947.4" font-size="10.8" fill="#c7c7d3" font-weight="normal" text-anchor="end"  stroke="#c7c7d3" stroke-width="0.35">0.213</text>
<clipPath id="c5"><rect x="14" y="798" width="467" height="202"/></clipPath>
<g clip-path="url(#c5)">
<path d="M53.1 956.3 L266.5 956.3 L308.1 847.5 L433.3 847.5 L433.3 1000 L53.1 1000 Z" fill="#73bf69" fill-opacity="0.12"/>
<path d="M53.1 956.5 L266.5 956.5 L308.1 847.5 L433.3 847.5" fill="none" stroke="#73bf69" stroke-opacity="0.74" stroke-width="1.35" stroke-linejoin="round"/>
</g>
<circle cx="117.3" cy="810" r="4.6" fill="none" stroke="#9d9da9" stroke-width="1"/><path d="M117.3 808.6 V812.6" stroke="#9d9da9" stroke-width="1"/><circle cx="117.3" cy="806.9" r="0.6" fill="#9d9da9"/>
<rect x="488.5" y="797.5" width="468" height="203" rx="2" fill="#181b1f" stroke="#34363b" stroke-width="1"/>
<text x="495" y="814" font-size="12" fill="#ccccdc" font-weight="bold" text-anchor="start" letter-spacing="-0.3">Upstream CPS</text>
<line x1="517" y1="836.5" x2="944.2" y2="836.5" stroke="#303237" stroke-width="1"/>
<line x1="517" y1="870.5" x2="944.2" y2="870.5" stroke="#303237" stroke-width="1"/>
<line x1="517" y1="905.5" x2="944.2" y2="905.5" stroke="#303237" stroke-width="1"/>
<line x1="517" y1="940.5" x2="944.2" y2="940.5" stroke="#303237" stroke-width="1"/>
<line x1="568.5" y1="836.3" x2="568.5" y2="1000" stroke="#303237" stroke-width="1"/>
<line x1="653.5" y1="836.3" x2="653.5" y2="1000" stroke="#303237" stroke-width="1"/>
<line x1="737.5" y1="836.3" x2="737.5" y2="1000" stroke="#303237" stroke-width="1"/>
<line x1="822.5" y1="836.3" x2="822.5" y2="1000" stroke="#303237" stroke-width="1"/>
<line x1="907.5" y1="836.3" x2="907.5" y2="1000" stroke="#303237" stroke-width="1"/>
<text x="512" y="839.5" font-size="10.8" fill="#c7c7d3" font-weight="normal" text-anchor="end"  stroke="#c7c7d3" stroke-width="0.35">100</text>
<text x="512" y="873.1999999999999" font-size="10.8" fill="#c7c7d3" font-weight="normal" text-anchor="end"  stroke="#c7c7d3" stroke-width="0.35">80</text>
<text x="512" y="908.3" font-size="10.8" fill="#c7c7d3" font-weight="normal" text-anchor="end"  stroke="#c7c7d3" stroke-width="0.35">60</text>
<text x="512" y="943.3" font-size="10.8" fill="#c7c7d3" font-weight="normal" text-anchor="end"  stroke="#c7c7d3" stroke-width="0.35">40</text>
<clipPath id="c6"><rect x="489" y="798" width="467" height="202"/></clipPath>
<g clip-path="url(#c6)">
</g>
<rect x="963.5" y="797.5" width="468" height="203" rx="2" fill="#181b1f" stroke="#34363b" stroke-width="1"/>
<text x="970" y="814" font-size="12" fill="#ccccdc" font-weight="bold" text-anchor="start" letter-spacing="-0.3">Upstream Latency</text>
<line x1="998" y1="838.5" x2="1419.7" y2="838.5" stroke="#303237" stroke-width="1"/>
<line x1="998" y1="863.5" x2="1419.7" y2="863.5" stroke="#303237" stroke-width="1"/>
<line x1="998" y1="890.5" x2="1419.7" y2="890.5" stroke="#303237" stroke-width="1"/>
<line x1="998" y1="915.5" x2="1419.7" y2="915.5" stroke="#303237" stroke-width="1"/>
<line x1="998" y1="941.5" x2="1419.7" y2="941.5" stroke="#303237" stroke-width="1"/>
<line x1="1048.5" y1="836.1" x2="1048.5" y2="941.1" stroke="#303237" stroke-width="1"/>
<line x1="1131.5" y1="836.1" x2="1131.5" y2="941.1" stroke="#303237" stroke-width="1"/>
<line x1="1215.5" y1="836.1" x2="1215.5" y2="941.1" stroke="#303237" stroke-width="1"/>
<line x1="1299.5" y1="836.1" x2="1299.5" y2="941.1" stroke="#303237" stroke-width="1"/>
<line x1="1384.5" y1="836.1" x2="1384.5" y2="941.1" stroke="#303237" stroke-width="1"/>
<text x="993.4" y="841.5" font-size="10.8" fill="#c7c7d3" font-weight="normal" text-anchor="end"  stroke="#c7c7d3" stroke-width="0.35">8 ms</text>
<text x="993.4" y="866.8" font-size="10.8" fill="#c7c7d3" font-weight="normal" text-anchor="end"  stroke="#c7c7d3" stroke-width="0.35">6 ms</text>
<text x="993.4" y="893.1" font-size="10.8" fill="#c7c7d3" font-weight="normal" text-anchor="end"  stroke="#c7c7d3" stroke-width="0.35">4 ms</text>
<text x="993.4" y="918.4" font-size="10.8" fill="#c7c7d3" font-weight="normal" text-anchor="end"  stroke="#c7c7d3" stroke-width="0.35">2 ms</text>
<text x="993.4" y="944.5" font-size="10.8" fill="#c7c7d3" font-weight="normal" text-anchor="end"  stroke="#c7c7d3" stroke-width="0.35">0 ms</text>
<text x="1048" y="955.3" font-size="10.8" fill="#c7c7d3" font-weight="normal" text-anchor="middle"  stroke="#c7c7d3" stroke-width="0.35">15:24:00</text>
<text x="1131.2" y="955.3" font-size="10.8" fill="#c7c7d3" font-weight="normal" text-anchor="middle"  stroke="#c7c7d3" stroke-width="0.35">15:25:00</text>
<text x="1215.4" y="955.3" font-size="10.8" fill="#c7c7d3" font-weight="normal" text-anchor="middle"  stroke="#c7c7d3" stroke-width="0.35">15:26:00</text>
<text x="1299.4" y="955.3" font-size="10.8" fill="#c7c7d3" font-weight="normal" text-anchor="middle"  stroke="#c7c7d3" stroke-width="0.35">15:27:00</text>
<text x="1383.6" y="955.3" font-size="10.8" fill="#c7c7d3" font-weight="normal" text-anchor="middle"  stroke="#c7c7d3" stroke-width="0.35">15:28:00</text>
<clipPath id="c7"><rect x="964" y="798" width="467" height="202"/></clipPath>
<g clip-path="url(#c7)">
<path d="M1000.5 883.7 L1131.2 883.7 L1151.0 881.6 L1215.4 881.6 L1235.7 880.6 L1383.6 880.6 L1403.8 846.2 L1403.8 941.1 L1000.5 941.1 Z" fill="#73bf69" fill-opacity="0.12"/>
<path d="M1000.5 934.2 L1215.4 934.2 L1235.7 919.8 L1299.4 919.8 L1319.6 914.0 L1383.6 914.0 L1403.8 907.7 L1403.8 941.1 L1000.5 941.1 Z" fill="#f2cc0c" fill-opacity="0.12"/>
<path d="M1000.5 937.5 L1403.8 937.5 L1403.8 941.1 L1000.5 941.1 Z" fill="#8ab8ff" fill-opacity="0.12"/>
<path d="M1000.5 883.5 L1131.2 883.5 L1151.0 881.5 L1215.4 881.5 L1235.7 880.5 L1383.6 880.5 L1403.8 846.5" fill="none" stroke="#73bf69" stroke-opacity="0.74" stroke-width="1.35" stroke-linejoin="round"/>
<path d="M1000.5 934.5 L1215.4 934.5 L1235.7 919.5 L1299.4 919.5 L1319.6 914.5 L1383.6 914.5 L1403.8 907.5" fill="none" stroke="#f2cc0c" stroke-opacity="0.74" stroke-width="1.35" stroke-linejoin="round"/>
<path d="M1000.5 937.5 L1403.8 937.5" fill="none" stroke="#8ab8ff" stroke-opacity="0.74" stroke-width="1.35" stroke-linejoin="round"/>
</g>
<text x="995" y="970.5" font-size="10.3" fill="#6e9fff" font-weight="normal" text-anchor="start"  stroke="#6e9fff" stroke-width="0.35">Name</text>
<text x="1302.7" y="970.5" font-size="10.3" fill="#6e9fff" font-weight="normal" text-anchor="end"  stroke="#6e9fff" stroke-width="0.35">Mean</text>
<text x="1360.8" y="970.5" font-size="10.3" fill="#6e9fff" font-weight="normal" text-anchor="end"  stroke="#6e9fff" stroke-width="0.35">Last *</text>
<text x="1410" y="970.5" font-size="10.3" fill="#6e9fff" font-weight="normal" text-anchor="end"  stroke="#6e9fff" stroke-width="0.35">Max</text>
<rect x="1419" y="959" width="5" height="20" rx="2.5" fill="#34363d"/>
<rect x="1438.5" y="797.5" width="468" height="203" rx="2" fill="#181b1f" stroke="#34363b" stroke-width="1"/>
<text x="1445" y="814" font-size="12" fill="#ccccdc" font-weight="bold" text-anchor="start" letter-spacing="-0.3">Upstream Total Connections</text>
<line x1="1461" y1="844.5" x2="1895.1" y2="844.5" stroke="#303237" stroke-width="1"/>
<line x1="1461" y1="886.5" x2="1895.1" y2="886.5" stroke="#303237" stroke-width="1"/>
<line x1="1461" y1="928.5" x2="1895.1" y2="928.5" stroke="#303237" stroke-width="1"/>
<line x1="1514.5" y1="836" x2="1514.5" y2="1000" stroke="#303237" stroke-width="1"/>
<line x1="1599.5" y1="836" x2="1599.5" y2="1000" stroke="#303237" stroke-width="1"/>
<line x1="1686.5" y1="836" x2="1686.5" y2="1000" stroke="#303237" stroke-width="1"/>
<line x1="1772.5" y1="836" x2="1772.5" y2="1000" stroke="#303237" stroke-width="1"/>
<line x1="1858.5" y1="836" x2="1858.5" y2="1000" stroke="#303237" stroke-width="1"/>
<text x="1456.2" y="847.5" font-size="10.8" fill="#c7c7d3" font-weight="normal" text-anchor="end"  stroke="#c7c7d3" stroke-width="0.35">15</text>
<text x="1456.2" y="889.5" font-size="10.8" fill="#c7c7d3" font-weight="normal" text-anchor="end"  stroke="#c7c7d3" stroke-width="0.35">10</text>
<text x="1456.2" y="931.5" font-size="10.8" fill="#c7c7d3" font-weight="normal" text-anchor="end"  stroke="#c7c7d3" stroke-width="0.35">5</text>
<clipPath id="c8"><rect x="1439" y="798" width="467" height="202"/></clipPath>
<g clip-path="url(#c8)">
<path d="M1464.9 903.4 L1879.1 903.4 L1879.1 1000 L1464.9 1000 Z" fill="#73bf69" fill-opacity="0.12"/>
<path d="M1464.9 903.5 L1879.1 903.5" fill="none" stroke="#73bf69" stroke-opacity="0.74" stroke-width="1.35" stroke-linejoin="round"/>
</g>
<rect x="1914" y="57" width="6" height="468" rx="3" fill="#3a3b43"/>
</svg></body></html>
